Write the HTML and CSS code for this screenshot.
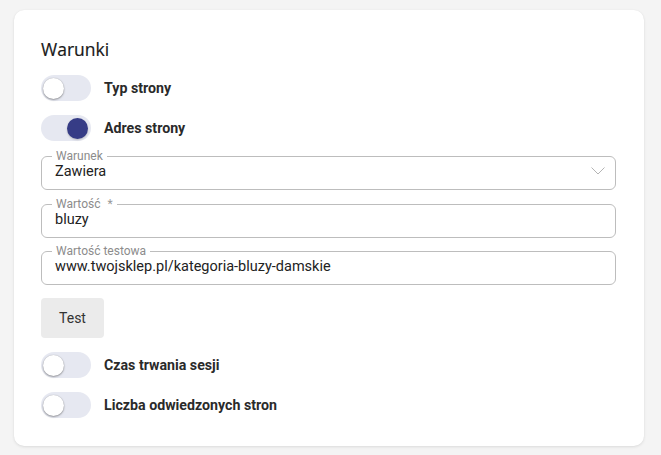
FILE: index.html
```html
<!DOCTYPE html>
<html lang="pl">
<head>
<meta charset="utf-8">
<title>Warunki</title>
<link rel="stylesheet" href="styles.css">
</head>
<body>
<div class="card">
  <h2 class="title">Warunki</h2>

  <div class="switch-row">
    <span class="switch"><span class="thumb"></span></span>
    <span class="switch-label">Typ strony</span>
  </div>

  <div class="switch-row">
    <span class="switch on"><span class="thumb"></span></span>
    <span class="switch-label">Adres strony</span>
  </div>

  <fieldset class="field field-first">
    <legend>Warunek</legend>
    <div class="field-body">
      <span class="value">Zawiera</span>
      <svg class="chevron" width="14" height="8" viewBox="0 0 14 8"><path d="M0.5 0.5 L7 7 L13.5 0.5" fill="none" stroke="#b4b4b4" stroke-width="1"/></svg>
    </div>
  </fieldset>

  <fieldset class="field field-second">
    <legend>Wartość <span class="req">*</span></legend>
    <div class="field-body">
      <span class="value">bluzy</span>
    </div>
  </fieldset>

  <fieldset class="field">
    <legend>Wartość testowa</legend>
    <div class="field-body">
      <span class="value">www.twojsklep.pl/kategoria-bluzy-damskie</span>
    </div>
  </fieldset>

  <button class="btn" type="button">Test</button>

  <div class="switch-row">
    <span class="switch"><span class="thumb"></span></span>
    <span class="switch-label">Czas trwania sesji</span>
  </div>

  <div class="switch-row">
    <span class="switch"><span class="thumb"></span></span>
    <span class="switch-label">Liczba odwiedzonych stron</span>
  </div>
</div>
</body>
</html>
```

FILE: styles.css
```css
* { box-sizing: border-box; }

html, body {
  margin: 0;
  padding: 0;
  background: #f4f4f4;
}

body {
  padding: 10px 17px 9px 14px;
  font-family: Roboto, "Liberation Sans", Arial, sans-serif;
  color: #222;
}

.card {
  background: #fff;
  border-radius: 10px;
  box-shadow: 0 1px 3px rgba(0, 0, 0, 0.10), 0 0 1px rgba(0, 0, 0, 0.06);
  padding: 27px 28px 27px 27px;
  display: flex;
  flex-direction: column;
  align-items: stretch;
  height: 436px;
}

.title {
  margin: 0 0 14px 0;
  font-family: "Open Sans", "Noto Sans", sans-serif;
  font-weight: 500;
  font-size: 17.5px;
  line-height: 24px;
  color: #181818;
  -webkit-text-stroke: 0.2px #181818;
}

.switch-row {
  display: flex;
  align-items: center;
  gap: 13px;
  height: 26px;
  margin-bottom: 14px;
  flex: none;
}

.switch-row:last-child { margin-bottom: 0; }

.switch {
  flex: none;
  width: 50px;
  height: 26px;
  border-radius: 13px;
  background: #e6e8f1;
  display: flex;
  align-items: center;
  padding: 0 2px;
}

.switch .thumb {
  width: 21px;
  height: 21px;
  border-radius: 50%;
  background: #fff;
  box-shadow: 0 1px 2px rgba(0, 0, 0, 0.35), 0 0 1px rgba(0, 0, 0, 0.25);
}

.switch.on { justify-content: flex-end; padding-right: 3px; }

.switch.on .thumb {
  background: #363c86;
  box-shadow: 0 1px 2px rgba(0, 0, 0, 0.2);
}

.switch-label {
  font-weight: 700;
  font-size: 14.2px;
  color: #2a2a2a;
}

.field {
  flex: none;
  margin: 0 0 6px 0;
  padding: 0 10px 8px 10px;
  border: 1px solid #bdbdbd;
  border-radius: 6px;
  min-width: 0;
}

.field-first { margin-top: -6px; margin-bottom: 7px; }
.field-second { margin-bottom: 6px; }

.field legend {
  padding: 0 4px;
  font-size: 12px;
  line-height: 14px;
  color: #8c8c8c;
}

.req {
  margin-left: 4px;
  color: #9a9a9a;
}

.field-body {
  display: flex;
  align-items: center;
  justify-content: space-between;
  padding-left: 3px;
  height: 18px;
}

.value {
  font-size: 14.5px;
  line-height: 18px;
  color: #222;
}

.chevron {
  display: block;
  margin-top: -3px;
}

.btn {
  flex: none;
  align-self: flex-start;
  margin: 7px 0 14px 0;
  width: 63px;
  height: 40px;
  border: none;
  border-radius: 4px;
  background: #ebebeb;
  font-family: Roboto, "Liberation Sans", Arial, sans-serif;
  font-size: 14px;
  color: #333;
  padding: 0;
}
```
